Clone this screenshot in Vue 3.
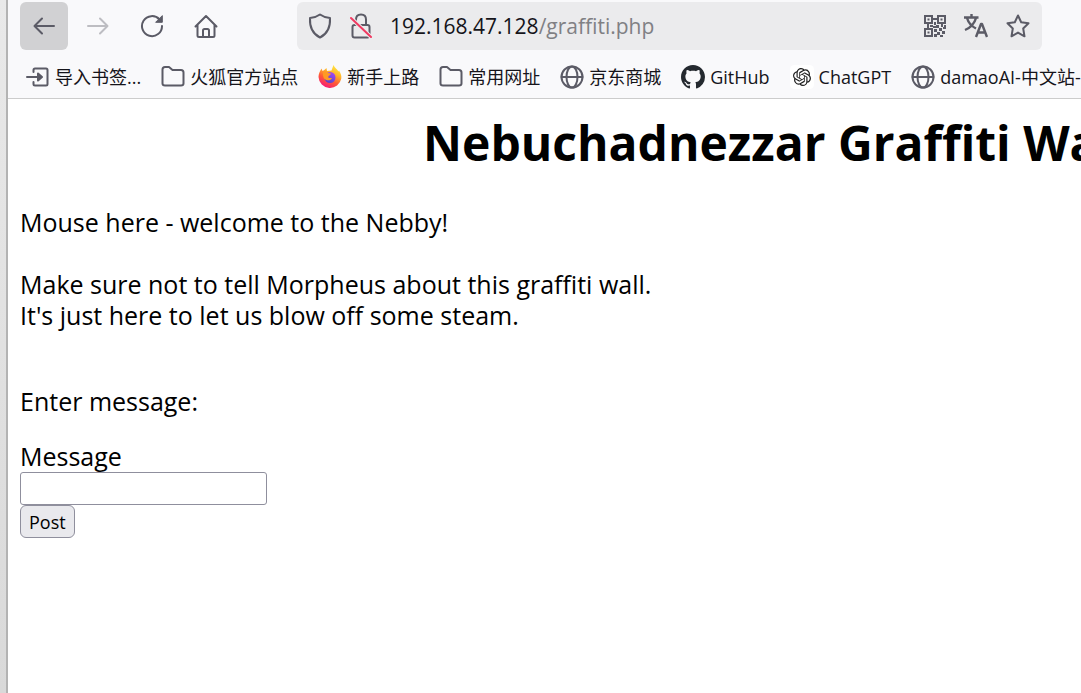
<script setup>
import { ref } from 'vue'

const message = ref('')
const bookmarks = [
  { icon: 'import', label: '导入书签...' },
  { icon: 'folder', label: '火狐官方站点' },
  { icon: 'firefox', label: '新手上路' },
  { icon: 'folder', label: '常用网址' },
  { icon: 'globe', label: '京东商城' },
  { icon: 'github', label: 'GitHub' },
  { icon: 'chatgpt', label: 'ChatGPT' },
  { icon: 'globe', label: 'damaoAI-中文站-' },
]
</script>

<template>
  <div class="desktop">
    <div class="window">
      <header class="chrome">
        <div class="toolbar">
          <nav class="nav">
            <button class="tool active" aria-label="Back">
              <svg width="24" height="24" viewBox="0 0 24 24" class="line"><path d="M22 12H3M10 4.500 2.500 12l7.500 7.500" /></svg>
            </button>
            <button class="tool faded" aria-label="Forward">
              <svg width="24" height="24" viewBox="0 0 24 24" class="line"><path d="M2 12h19M14 4.500l7.500 7.500-7.500 7.500" /></svg>
            </button>
            <button class="tool" aria-label="Reload">
              <svg width="24" height="24" viewBox="0 0 24 24" class="line"><path d="M19.500 5.500A10 10 0 1 0 22 12" /><path d="M22.300 2v6.300H16z" fill="currentColor" stroke-width="1" /></svg>
            </button>
            <button class="tool" aria-label="Home">
              <svg width="24" height="24" viewBox="0 0 24 24" class="line"><path d="M1.500 12.500 12 2l10.500 10.500M3.500 11v10.500q0 1.500 1.500 1.500h14q1.500 0 1.500-1.500V11M9 23v-6.500q0-1.500 1.500-1.500h3q1.500 0 1.500 1.500V23" /></svg>
            </button>
          </nav>
          <div class="urlbar">
            <svg width="24" height="26" viewBox="0 0 24 26" class="line"><path d="M12 1.500c-3.500 2.500-6.500 3.300-10 3.500-.5 9 3 16 10 19.500C19 21 22.500 14 22 5c-3.500-.2-6.500-1-10-3.500z" /></svg>
            <svg width="22" height="26" viewBox="0 0 22 26" class="line"><path d="M6 12V6.500q0-5 5-5t5 5V12M4.500 12h13q2 0 2 2v8.500q0 2-2 2h-13q-2 0-2-2V14q0-2 2-2z" /><path d="M1 5l20 19" stroke="#ebebed" stroke-width="4" /><path d="M1 5l20 19" stroke="#f03a62" /></svg>
            <span class="address">192.168.47.128<span class="path">/graffiti.php</span></span>
            <svg width="22" height="22" viewBox="0 0 22 22" class="qr"><path d="M0 0h9v9H0zM2 2v5h5V2zM13 0h9v9h-9zM15 2v5h5V2zM0 13h9v9H0zM2 15v5h5v-5zM3.500 3.500h2v2h-2zM16.500 3.500h2v2h-2zM3.500 16.500h2v2h-2zM9 3h4v2H9zM3 9h2v4H3zM6 10h3v2H6zM10 7h2v3h-2zM12 10h3v3h-3zM17 9h2v3h-2zM20 10h2v2h-2zM9 11h3v2H9zM10 14h3v3h-3zM13 17h3v3h-3zM15 13h3v3h-3zM18 16h3v3h-3zM16 20h3v2h-3zM10 19h3v3h-3zM19 12h3v2h-3z" /></svg>
            <svg width="24" height="24" viewBox="0 0 24 24" class="line translate"><path d="M0 3.500h14.500M7.500 0v3.500M3 4c1.500 5 5 8.500 9 10.500M12 4C10.500 9.500 7 13.500 1 16M12 23l5-13h1l5 13M14 18.500h7.500" /></svg>
            <svg width="24" height="24" viewBox="0 0 24 24" class="line"><path d="M12 1.500l3.200 6.800 7.300 1-5.300 5.200 1.300 7.800-6.500-3.700-6.500 3.700 1.300-7.800-5.300-5.200 7.300-1z" /></svg>
          </div>
        </div>
        <nav class="bookmarks">
          <a v-for="b in bookmarks" :key="b.label" class="bookmark" href="#">
            <svg v-if="b.icon === 'import'" width="24" height="24" viewBox="0 0 24 24" class="line"><path d="M7.500 7V5q0-1.500 1.500-1.500h11q1.500 0 1.500 1.500v14q0 1.500-1.500 1.500H9q-1.500 0-1.500-1.500v-2M1 12h13" /><path d="M12 8.500l4 3.500-4 3.500z" fill="currentColor" /></svg>
            <svg v-else-if="b.icon === 'folder'" width="24" height="24" viewBox="0 0 24 24" class="line"><path d="M1.500 18.500v-14q0-2.500 2.500-2.500h4l3.500 3H20q2.500 0 2.500 2.500v11q0 2-2.500 2H4q-2.500 0-2.500-2z" /></svg>
            <svg v-else-if="b.icon === 'globe'" width="24" height="24" viewBox="0 0 24 24" class="line"><circle cx="12" cy="12" r="10.500" /><ellipse cx="12" cy="12" rx="5.500" ry="10.500" /><path d="M1.500 12h21" /></svg>
            <svg v-else-if="b.icon === 'github'" width="24" height="24" viewBox="0 0 16 16"><path fill="#24292f" d="M8 0C3.580 0 0 3.580 0 8c0 3.540 2.290 6.530 5.470 7.590.4.070.55-.17.55-.38 0-.19-.01-.82-.01-1.490-2.010.37-2.530-.49-2.690-.94-.09-.23-.48-.94-.82-1.130-.28-.15-.68-.52-.01-.53.63-.01 1.080.58 1.230.82.72 1.210 1.870.87 2.330.66.07-.52.28-.87.51-1.070-1.780-.2-3.640-.89-3.640-3.950 0-.87.31-1.590.82-2.150-.08-.2-.36-1.020.08-2.120 0 0 .67-.21 2.200.82.64-.18 1.320-.27 2-.27s1.360.09 2 .27c1.530-1.040 2.200-.82 2.200-.82.44 1.100.16 1.920.08 2.120.51.56.82 1.270.82 2.150 0 3.070-1.870 3.750-3.650 3.950.29.25.54.73.54 1.480 0 1.070-.01 1.930-.01 2.200 0 .21.15.46.55.38A8.010 8.010 0 0 0 16 8c0-4.420-3.580-8-8-8z" /></svg>
            <svg v-else-if="b.icon === 'chatgpt'" width="24" height="24" viewBox="-4 -4 32 32"><rect x="-4" y="-4" width="32" height="32" rx="6" fill="#fff" /><path fill="#202020" d="M22.282 9.821a5.985 5.985 0 0 0-.516-4.910 6.046 6.046 0 0 0-6.510-2.900A6.065 6.065 0 0 0 4.981 4.182a5.985 5.985 0 0 0-3.998 2.900 6.046 6.046 0 0 0 .743 7.097 5.980 5.980 0 0 0 .511 4.911 6.051 6.051 0 0 0 6.515 2.900A5.985 5.985 0 0 0 13.260 24a6.056 6.056 0 0 0 5.772-4.206 5.990 5.990 0 0 0 3.998-2.900 6.056 6.056 0 0 0-.748-7.073zM13.260 22.430a4.476 4.476 0 0 1-2.876-1.041l.141-.080 4.779-2.759a.795.795 0 0 0 .392-.681v-6.737l2.020 1.169a.071.071 0 0 1 .038.052v5.583a4.504 4.504 0 0 1-4.494 4.494zM3.600 18.304a4.471 4.471 0 0 1-.535-3.014l.142.085 4.783 2.759a.771.771 0 0 0 .780 0l5.843-3.369v2.332a.080.080 0 0 1-.033.062L9.740 19.950a4.500 4.500 0 0 1-6.140-1.646zM2.341 7.896a4.485 4.485 0 0 1 2.365-1.973V11.600a.766.766 0 0 0 .388.677l5.815 3.354-2.020 1.169a.076.076 0 0 1-.071 0l-4.831-2.787A4.504 4.504 0 0 1 2.341 7.872zm16.597 3.855l-5.833-3.387L15.119 7.200a.076.076 0 0 1 .071 0l4.831 2.791a4.494 4.494 0 0 1-.677 8.105v-5.678a.790.790 0 0 0-.407-.667zm2.010-3.023l-.141-.085-4.774-2.782a.776.776 0 0 0-.785 0L9.409 9.230V6.897a.066.066 0 0 1 .028-.061l4.831-2.787a4.499 4.499 0 0 1 6.680 4.660zM8.307 12.863l-2.020-1.164a.080.080 0 0 1-.038-.057V6.074a4.499 4.499 0 0 1 7.376-3.453l-.142.080L8.704 5.460a.795.795 0 0 0-.393.681zm1.097-2.365l2.602-1.500 2.607 1.500v2.999l-2.597 1.500-2.607-1.500z" /></svg>
            <svg v-else width="24" height="24" viewBox="0 0 24 24">
              <defs>
                <linearGradient id="flame" x1="0.800" y1="0" x2="0.300" y2="1"><stop offset="0" stop-color="#fff044" /><stop offset="0.350" stop-color="#ffb52b" /><stop offset="0.650" stop-color="#ff5a36" /><stop offset="1" stop-color="#f5157c" /></linearGradient>
                <linearGradient id="orb" x1="0.800" y1="0" x2="0.300" y2="1"><stop offset="0" stop-color="#a847f5" /><stop offset="1" stop-color="#5146c8" /></linearGradient>
              </defs>
              <path fill="url(#flame)" d="M3.500 3.500 4.500 6l1.500-.7L8.500 3l.5 3 4.500-.5L15.500 0c.8 2.800 3.500 4 5 6.500l.5-1c2 3 2.600 5.500 2.300 8A11.500 11.500 0 0 1 .5 12C.5 9 2 6 3.500 3.500z" />
              <circle cx="12" cy="12.500" r="5.500" fill="url(#orb)" />
              <path fill="#ff9a24" d="M5.500 6.500c3-.8 4 .5 4.500 1.500l3 .5c0 1.500-2.500 1.800-3 3.500 1 1.500 3 1 4 1-1 3-6 3-8 .5-1-1.500-1.500-5-.5-7z" />
            </svg>
            <span>{{ b.label }}</span>
          </a>
        </nav>
      </header>

      <main class="page">
        <h1>Nebuchadnezzar Graffiti Wall</h1>
        <p>Mouse here - welcome to the Nebby!</p>
        <p class="note">Make sure not to tell Morpheus about this graffiti wall.<br />It's just here to let us blow off some steam.</p>
        <p class="prompt">Enter message:</p>
        <form @submit.prevent>
          <label for="message">Message</label>
          <input id="message" v-model="message" type="text" />
          <button type="submit">Post</button>
        </form>
      </main>
    </div>
  </div>
</template>

<style>
body {
  margin: 0;
}
</style>

<style scoped>
.desktop {
  box-sizing: border-box;
  min-height: 100vh;
  padding-left: 6px;
  display: flex;
  overflow: hidden;
  background: linear-gradient(#e9e9e9, #d9d9d9);
  font-family: "Open Sans", "Noto Sans CJK SC", sans-serif;
}
.window {
  flex: 1;
  min-width: 0;
  border-left: 2px solid #b3b3b3;
  background: #fff;
}
.chrome {
  background: #f9f9fb;
  border-bottom: 1px solid #ccc;
  color: #5b5b66;
}
.line {
  fill: none;
  stroke: currentColor;
  stroke-width: 2;
  stroke-linecap: round;
  stroke-linejoin: round;
}
svg {
  flex: none;
  display: block;
}
.toolbar {
  display: flex;
  padding: 2px 39px 0 12px;
}
.nav {
  display: flex;
  gap: 6px;
  margin-right: 67px;
}
.tool {
  width: 48px;
  height: 48px;
  display: grid;
  place-items: center;
  padding: 0;
  border: 0;
  border-radius: 6px;
  background: none;
  color: inherit;
}
.tool.active {
  background: #d1d1d3;
}
.tool.faded {
  color: #bdbdc2;
}
.urlbar {
  flex: 1;
  display: flex;
  align-items: center;
  gap: 18px;
  padding: 0 12px 0 11px;
  border-radius: 6px;
  background: #ebebed;
}
.address {
  flex: 1;
  font-size: 21px;
  line-height: 30px;
  color: #15141a;
}
.path {
  color: #808084;
}
.qr {
  fill: #5b5b66;
  fill-rule: evenodd;
}
.line.translate {
  stroke-linecap: butt;
  stroke-width: 2.4;
}
.bookmarks {
  display: flex;
  gap: 20px;
  box-sizing: border-box;
  height: 48px;
  padding: 6px 0 0 18px;
  align-items: center;
  overflow: hidden;
}
.bookmark {
  display: flex;
  flex: none;
  align-items: center;
  gap: 5px;
  color: #5b5b66;
  text-decoration: none;
}
.bookmark span {
  font-size: 18px;
  line-height: 26px;
  color: #15141a;
  white-space: nowrap;
}
.page {
  padding: 8px 12px;
  font-size: 25px;
  line-height: 31px;
  color: #000;
}
h1 {
  margin: 0 0 28px 403px;
  font-size: 48px;
  line-height: 72px;
  white-space: nowrap;
}
p {
  margin: 0 0 31px;
}
.note {
  margin-bottom: 55px;
}
.prompt {
  margin-bottom: 24px;
}
form {
  display: flex;
  flex-direction: column;
  align-items: flex-start;
}
input {
  box-sizing: border-box;
  width: 247px;
  height: 33px;
  padding: 2px 4px;
  border: 1px solid #8f8f9d;
  border-radius: 3px;
  background: #fff;
  font: inherit;
  font-size: 20px;
}
form button {
  height: 33px;
  padding: 0 8px;
  border: 1px solid #8f8f9d;
  border-radius: 6px;
  background: #e9e9ed;
  color: #000;
  font-family: inherit;
  font-size: 18px;
  line-height: 28px;
}
</style>
